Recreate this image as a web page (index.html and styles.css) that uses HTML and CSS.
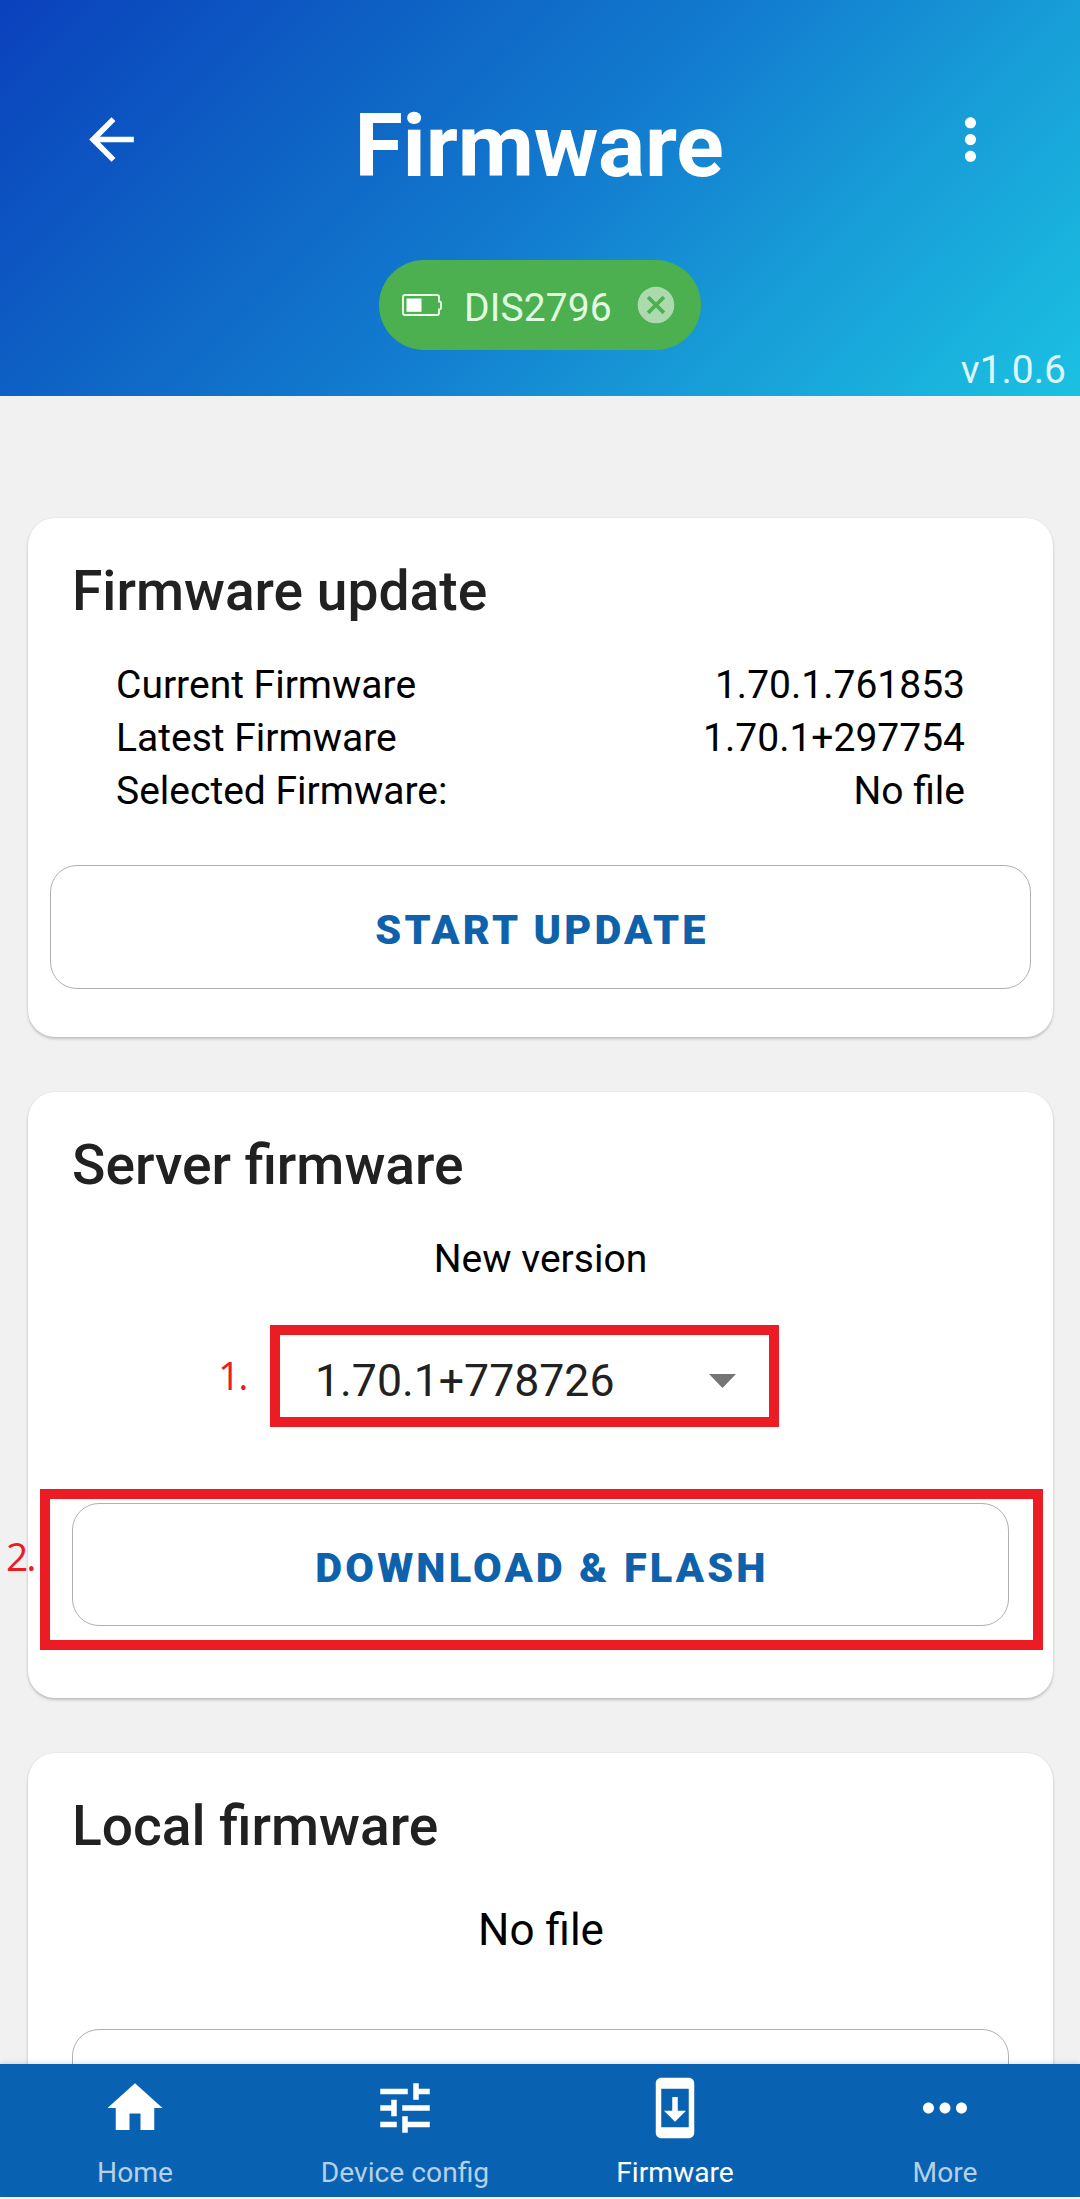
FILE: index.html
```html
<!DOCTYPE html>
<html lang="en">
<head>
<meta charset="utf-8">
<title>Firmware</title>
<link rel="stylesheet" href="styles.css">
</head>
<body>
<div class="app">
  <header class="header">
    <div class="toolbar">
      <svg class="toolbar-icon" viewBox="0 0 24 24"><path d="M20 11H7.83l5.59-5.59L12 4l-8 8 8 8 1.41-1.41L7.83 13H20v-2z"/></svg>
      <h1 class="page-title">Firmware</h1>
      <svg class="toolbar-icon" viewBox="0 0 24 24"><path d="M12 8c1.1 0 2-.9 2-2s-.9-2-2-2-2 .9-2 2 .9 2 2 2zm0 2c-1.1 0-2 .9-2 2s.9 2 2 2 2-.9 2-2-.9-2-2-2zm0 6c-1.1 0-2 .9-2 2s.9 2 2 2 2-.9 2-2-.9-2-2-2z"/></svg>
    </div>
    <div class="chip">
      <svg class="battery" viewBox="0 0 40 22"><path d="M3 1H35Q37 1 37 3V7.5H37.5Q39 7.5 39 9V14Q39 15.5 37.500 15.500H37V19Q37 21 35 21H3Q1 21 1 19V3Q1 1 3 1Z" fill="none" stroke="#e8ffe8" stroke-width="1.900"/><rect x="4.500" y="4.500" width="15" height="13.300" fill="#fff"/></svg>
      <span class="chip-label">DIS2796</span>
      <svg class="chip-close" viewBox="0 0 24 24"><path d="M12 2C6.470 2 2 6.470 2 12s4.470 10 10 10 10-4.470 10-10S17.530 2 12 2zm5 13.590L15.590 17 12 13.410 8.410 17 7 15.590 10.590 12 7 8.410 8.410 7 12 10.590 15.590 7 17 8.410 13.410 12 17 15.590z"/></svg>
    </div>
    <div class="version">v1.0.6</div>
  </header>

  <main class="content">
    <section class="card card-update">
      <h2 class="card-title">Firmware update</h2>
      <dl class="details">
        <div class="detail"><dt>Current Firmware</dt><dd>1.70.1.761853</dd></div>
        <div class="detail"><dt>Latest Firmware</dt><dd>1.70.1+297754</dd></div>
        <div class="detail"><dt>Selected Firmware:</dt><dd>No file</dd></div>
      </dl>
      <button class="button">START UPDATE</button>
    </section>

    <section class="card card-server">
      <h2 class="card-title">Server firmware</h2>
      <p class="caption">New version</p>
      <div class="select">
        <span>1.70.1+778726</span>
        <svg class="caret" viewBox="0 0 27 14"><path d="M0 0H27L13.500 14Z"/></svg>
      </div>
      <button class="button">DOWNLOAD &amp; FLASH</button>
      <div class="marker marker-select"></div>
      <span class="step step-one">1.</span>
      <div class="marker marker-flash"></div>
      <span class="step step-two">2.</span>
    </section>

    <section class="card card-local">
      <h2 class="card-title">Local firmware</h2>
      <p class="file-name">No file</p>
      <button class="button"></button>
    </section>
  </main>

  <nav class="tabs">
    <a class="tab"><svg class="tab-icon" viewBox="0 0 24 24"><path d="M10 20v-6h4v6h5v-8h3L12 3 2 12h3v8z"/></svg><span>Home</span></a>
    <a class="tab"><svg class="tab-icon" viewBox="0 0 24 24"><path d="M3 17v2h6v-2H3zM3 5v2h10V5H3zm10 16v-2h8v-2h-8v-2h-2v6h2zM7 9v2H3v2h4v2h2V9H7zm14 4v-2H11v2h10zm-6-4h2V7h4V5h-4V3h-2v6z"/></svg><span>Device config</span></a>
    <a class="tab tab-active"><svg class="tab-icon" viewBox="0 0 24 24"><path d="M17 1.010L7 1c-1.100 0-2 .9-2 2v18c0 1.100.9 2 2 2h10c1.100 0 2-.9 2-2V3c0-1.100-.9-1.990-2-1.990zM17 19H7V5h10v14zm-1-6h-3V8h-2v5H8l4 4 4-4z"/></svg><span>Firmware</span></a>
    <a class="tab"><svg class="tab-icon" viewBox="0 0 24 24"><path d="M6 10c-1.100 0-2 .9-2 2s.9 2 2 2 2-.9 2-2-.9-2-2-2zm12 0c-1.100 0-2 .9-2 2s.9 2 2 2 2-.9 2-2-.9-2-2-2zm-6 0c-1.100 0-2 .9-2 2s.9 2 2 2 2-.9 2-2-.9-2-2-2z"/></svg><span>More</span></a>
  </nav>
</div>
</body>
</html>
```
FILE: styles.css
```css
* {
  box-sizing: border-box;
}

body {
  margin: 0;
  background: #fff;
  font-family: Roboto, "Liberation Sans", sans-serif;
  color: #000;
}

h1, h2, p, dl, dt, dd {
  margin: 0;
}

.app {
  display: flex;
  flex-direction: column;
  height: 2199px;
  padding-bottom: 2px;
  overflow: hidden;
}

/* Header */

.header {
  display: flex;
  flex-direction: column;
  flex: none;
  height: 396px;
  padding-top: 94px;
  background: linear-gradient(135deg, #0a41bd 0%, #0f68c6 34%, #127acf 50%, #1799d6 70%, #1bc1e2 100%);
  color: #fff;
}

.toolbar {
  display: flex;
  justify-content: space-between;
  height: 104px;
  padding: 0 76px 0 78px;
}

.toolbar-icon {
  width: 67px;
  height: 67px;
  margin-top: 12px;
  fill: #fff;
}

.page-title {
  padding-right: 4px;
  font-size: 88px;
  font-weight: 700;
  line-height: 104px;
  letter-spacing: -0.2px;
}

.chip {
  display: flex;
  align-items: center;
  align-self: center;
  width: 322px;
  height: 90px;
  margin-top: 62px;
  padding: 0 23px;
  border-radius: 45px;
  background: #4caf50;
}

.battery {
  width: 40px;
  height: 22px;
}

.chip-label {
  margin-left: 22px;
  padding-top: 5px;
  font-size: 39px;
  line-height: 46px;
  letter-spacing: 0.1px;
  color: #e1fbe1;
}

.chip-close {
  width: 44px;
  height: 44px;
  margin-left: auto;
  fill: #abdaad;
}

.version {
  align-self: flex-end;
  padding-right: 14px;
  font-size: 39px;
  line-height: 40px;
  color: #dff6fc;
}

/* Cards */

.content {
  display: flex;
  flex-direction: column;
  flex: 1;
  min-height: 0;
  padding: 122px 27px 0 28px;
  overflow: hidden;
  background: #f1f1f1;
}

.card {
  position: relative;
  display: flex;
  flex-direction: column;
  flex: none;
  margin-bottom: 55px;
  padding: 41px 44px 72px;
  border-radius: 27px;
  background: #fff;
  box-shadow: 0 2px 3px rgba(0, 0, 0, 0.2), 0 0 2px rgba(0, 0, 0, 0.08);
}

.card-title {
  font-size: 55.150px;
  font-weight: 500;
  line-height: 64px;
  color: #212121;
}

.card-update {
  padding: 41px 22px 48px;
}

.card-update .card-title {
  padding-left: 22px;
}

.details {
  margin: 36px 66px 47px 66px;
}

.detail {
  display: flex;
  justify-content: space-between;
  font-size: 39px;
  line-height: 53px;
}

.button {
  height: 124px;
  padding: 5px 0 0 3px;
  border: 1.500px solid #b0b0b0;
  border-radius: 27px;
  background: #fff;
  color: #0d62ab;
  font: 900 41.500px/117px Roboto, "Liberation Sans", sans-serif;
  letter-spacing: 3.150px;
}

.card-server .button {
  height: 123px;
}

.caption {
  margin-top: 36px;
  font-size: 39px;
  line-height: 53px;
  text-align: center;
}

.select {
  display: flex;
  align-items: center;
  justify-content: space-between;
  width: 421px;
  margin: 65px 0 92px 243px;
  font-size: 44.600px;
  line-height: 60px;
  color: #212121;
}

.caret {
  width: 27px;
  height: 14px;
  fill: #757575;
}

.card-local {
  margin-bottom: 0;
}

.file-name {
  margin: 42px 0 69px;
  padding-left: 1px;
  font-size: 44px;
  line-height: 60px;
  text-align: center;
}

/* Step callouts drawn over the server card */

.marker {
  position: absolute;
  border: 10px solid #ec1c24;
}

.marker-select {
  left: 242px;
  top: 233px;
  width: 509px;
  height: 102px;
}

.marker-flash {
  left: 12px;
  top: 397px;
  width: 1003px;
  height: 161px;
}

.step {
  position: absolute;
  font: 400 39px/54px "Open Sans", "Noto Sans", sans-serif;
  letter-spacing: -2px;
  color: #ec1c24;
}

.step-one {
  left: 190px;
  top: 256px;
}

.step-two {
  left: -22px;
  top: 437px;
}

/* Bottom navigation */

.tabs {
  position: relative;
  display: grid;
  grid-template-columns: repeat(4, 1fr);
  flex: none;
  height: 133px;
  padding-top: 11px;
  background: #0962b1;
  box-shadow: 0 -1px 6px rgba(0, 0, 0, 0.12);
}

.tab {
  display: flex;
  flex-direction: column;
  align-items: center;
  gap: 16px;
  font-size: 28.200px;
  line-height: 32px;
  color: #b5d0e7;
}

.tab-active {
  color: #fff;
}

.tab-icon {
  width: 66px;
  height: 66px;
  fill: #fff;
}
```
